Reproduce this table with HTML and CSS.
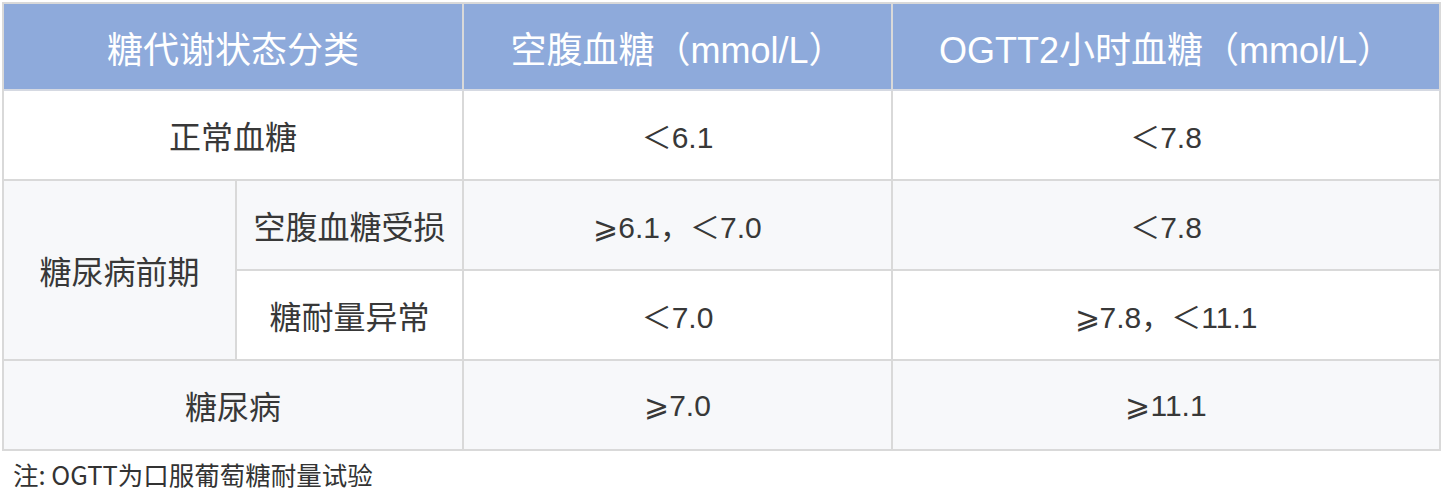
FILE: index.html
```html
<!DOCTYPE html>
<html lang="zh-CN">
<head>
<meta charset="utf-8">
<title>糖代谢状态分类</title>
<link rel="stylesheet" href="styles.css">
</head>
<body>
<div class="page">
  <table class="glu">
    <colgroup>
      <col class="c-a"><col class="c-b"><col class="c-c"><col class="c-d">
    </colgroup>
    <thead>
      <tr>
        <th colspan="2">糖代谢状态分类</th>
        <th>空腹血糖（mmol/L）</th>
        <th>OGTT2小时血糖（mmol/L）</th>
      </tr>
    </thead>
    <tbody>
      <tr class="odd">
        <td colspan="2" class="label">正常血糖</td>
        <td>＜6.1</td>
        <td>＜7.8</td>
      </tr>
      <tr class="even">
        <td rowspan="2" class="label span">糖尿病前期</td>
        <td class="label">空腹血糖受损</td>
        <td>⩾6.1，＜7.0</td>
        <td>＜7.8</td>
      </tr>
      <tr class="odd">
        <td class="label">糖耐量异常</td>
        <td>＜7.0</td>
        <td>⩾7.8，＜11.1</td>
      </tr>
      <tr class="even">
        <td colspan="2" class="label">糖尿病</td>
        <td>⩾7.0</td>
        <td>⩾11.1</td>
      </tr>
    </tbody>
  </table>
  <p class="note">注: OGTT为口服葡萄糖耐量试验</p>
</div>
</body>
</html>
```
FILE: styles.css
```css
html, body {
  margin: 0;
  padding: 0;
  background: #ffffff;
}
.page {
  padding: 2px 1px 0 2px;
  font-family: "Liberation Sans", "Noto Sans CJK SC", sans-serif;
  color: #333333;
}
.glu {
  table-layout: fixed;
  width: 1439px;
  border-spacing: 0;
  border-collapse: separate;
  border-top: 2px solid #d9d9d9;
  border-left: 2px solid #d9d9d9;
}
.c-a { width: 233px; }
.c-b { width: 227px; }
.c-c { width: 429px; }
.c-d { width: 548px; }
.glu th,
.glu td {
  border-right: 2px solid #d9d9d9;
  border-bottom: 2px solid #d9d9d9;
  text-align: center;
  vertical-align: middle;
  padding: 0;
}
.glu th {
  height: 87px;
  box-sizing: border-box;
  background: #8eaadb;
  color: #ffffff;
  font-weight: normal;
  font-size: 36px;
}
.glu thead tr th {
  border-bottom: 2px solid #d5d9e2;
}
.glu td {
  height: 90px;
  box-sizing: border-box;
  font-size: 30px;
  color: #383838;
}
.glu td.label {
  font-size: 32px;
}
.odd td { background: #ffffff; }
.even td { background: #f7f8fa; }
.glu td.span { background: #f7f8fa; }
.note {
  margin: 5px 0 0 11px;
  font-family: "Noto Sans CJK SC", sans-serif;
  font-size: 25.5px;
  line-height: 36px;
  color: #333333;
}
```
